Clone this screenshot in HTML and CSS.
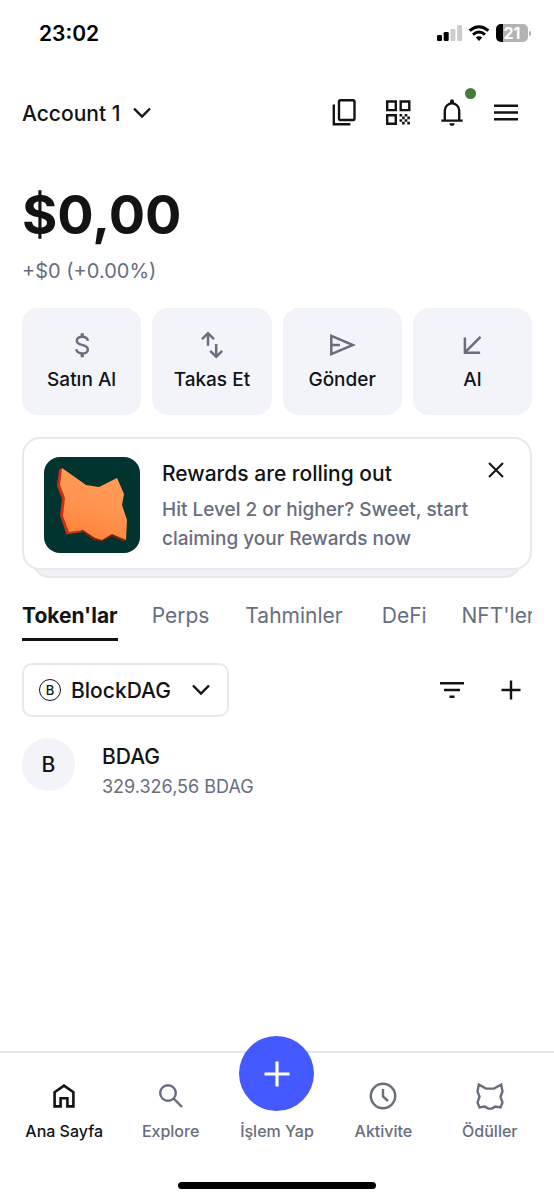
FILE: index.html
```html
<!DOCTYPE html>
<html lang="tr">
<head>
<meta charset="utf-8">
<meta name="viewport" content="width=device-width, initial-scale=1">
<title>Account 1</title>
<link rel="stylesheet" href="styles.css">
</head>
<body>
<div class="status">
  <time class="clock">23:02</time>
  <div class="status-icons">
    <svg width="26" height="16" viewBox="0 0 26 16" aria-hidden="true"><rect x="0" y="10" width="5" height="6" rx="1.3"/><rect x="6.7" y="7" width="5" height="9" rx="1.3"/><rect x="13.4" y="4" width="5" height="12" rx="1.3" fill="#ccc"/><rect x="20.1" y="0" width="5" height="16" rx="1.3" fill="#ccc"/></svg>
    <svg width="22" height="16" viewBox="0 0 22 16" aria-hidden="true"><path d="M1.6 5.7Q11-2.4 20.4 5.7M5 9.6Q11 4.5 17 9.6" fill="none" stroke="#000" stroke-width="2.9"/><path d="M7.7 12.6Q11 9.8 14.3 12.6L11 16z"/></svg>
    <div class="battery"><span class="battery-body">21</span><span class="battery-tip"></span></div>
  </div>
</div>

<header class="header">
  <button class="account" type="button">Account 1
    <svg class="chevron" width="18" height="12" viewBox="0 0 18 12" aria-hidden="true"><path d="M1 1.5l8 8 8-8"/></svg>
  </button>
  <div class="header-actions">
    <button class="icon-btn" type="button" aria-label="Copy"><svg width="28" height="28" viewBox="0 0 28 28"><rect x="9" y="1.200" width="15.500" height="19.800" rx="1.600"/><path d="M3.800 5.500v19.800h16.600"/></svg></button>
    <button class="icon-btn" type="button" aria-label="QR"><svg width="28" height="28" viewBox="0 0 28 28"><path d="M3.200 2.500h8.600v8.600H3.200zM16.700 2.500h8.600v8.600h-8.600zM3.200 16.200h8.600v8.600H3.200z"/><path class="solid" d="M15.500 15h2.600v2.600h-2.600zM20.700 15h2.600v2.600h-2.600zM18.100 17.600h2.600v2.600h-2.600zM23.300 17.600h2.600v2.600h-2.600zM15.500 20.200h2.600v2.600h-2.600zM20.700 20.200h2.600v2.600h-2.600zM18.100 22.800h2.600v2.600h-2.600zM23.300 22.800h2.600v2.600h-2.600z"/></svg></button>
    <button class="icon-btn" type="button" aria-label="Notifications"><svg width="28" height="28" viewBox="0 0 28 28"><path d="M3.300 21.600h21.400M6.800 21.600v-10a7.200 7.200 0 0 1 14.400 0v10"/><path class="solid" d="M12 4.200V2.200a2 2 0 0 1 4 0v2zM11.400 24.200h5.200a2.600 2.600 0 0 1-5.200 0z"/></svg><span class="dot"></span></button>
    <button class="icon-btn" type="button" aria-label="Menu"><svg width="28" height="28" viewBox="0 0 28 28"><path d="M2 6.800h24M2 13.500h24M2 20.200h24"/></svg></button>
  </div>
</header>

<main class="main">
  <h1 class="balance">$0,00</h1>
  <p class="change">+$0 (+0.00%)</p>

  <div class="actions">
    <button class="action" type="button"><svg width="28" height="28" viewBox="0 0 28 28" aria-hidden="true"><path d="M20 9.800C19.400 7.400 17.200 5.800 14.200 5.800c-3.200 0-5.400 1.600-5.400 3.900 0 2.500 2.200 3.400 5.300 4.200 3.400.900 5.700 1.900 5.700 4.500 0 2.500-2.300 4.100-5.500 4.100-3.200 0-5.500-1.700-6.100-4.200"/><path stroke-width="3.200" d="M14.200 2.200v4M14.200 22.200v4"/></svg>Satın Al</button>
    <button class="action" type="button"><svg width="28" height="28" viewBox="0 0 28 28" aria-hidden="true"><path d="M10 14.800V2.500M4 8.200l6-6 6 6M18.200 13v12.500M12.200 19.800l6 6 6-6"/></svg>Takas Et</button>
    <button class="action" type="button"><svg width="28" height="28" viewBox="0 0 28 28" aria-hidden="true"><path d="M3.300 4.900v18.200L25 14zM4 14h8"/></svg>Gönder</button>
    <button class="action" type="button"><svg width="28" height="28" viewBox="0 0 28 28" aria-hidden="true"><path d="M22.500 5.800L7 21.300M6.900 6.500v15.200h15.200"/></svg>Al</button>
  </div>

  <section class="promo">
    <div class="promo-card">
      <svg class="promo-art" width="96" height="96" viewBox="0 0 96 96" aria-hidden="true">
        <defs><linearGradient id="fox" x1="0.600" y1="0" x2="0.300" y2="1"><stop offset="0" stop-color="#ff9d57"/><stop offset="0.500" stop-color="#ff9450"/><stop offset="1" stop-color="#ff8238"/></linearGradient></defs>
        <rect width="96" height="96" rx="16" fill="#02342f"/>
        <path d="M18 11L15 12.500 13 29l5 13-2 16 6.500 19.500L39 75 58 60z" fill="#c92f13"/>
        <path d="M36 73l14 10.500 8 .800 10-5 13 6 1-3-14-8z" fill="#7a210f"/>
        <path d="M18 11L42 28l13 2 18-9 7 16-2 11 5 15-1 20-14-6-10 6-7-2-12-8-14 2-6-16 2-18-5-13z" fill="url(#fox)"/>
      </svg>
      <div class="promo-text">
        <h2 class="promo-title">Rewards are rolling out</h2>
        <p class="promo-copy">Hit Level 2 or higher? Sweet, start claiming your Rewards now</p>
      </div>
      <button class="close" type="button" aria-label="Close"><svg width="16" height="16" viewBox="0 0 16 16"><path d="M1 1l14 14M15 1L1 15"/></svg></button>
    </div>
  </section>

  <nav class="tabs">
    <a class="tab active" href="#" data-label="Token'lar"><span>Token'lar</span></a>
    <a class="tab" href="#" data-label="Perps"><span>Perps</span></a>
    <a class="tab" href="#" data-label="Tahminler"><span>Tahminler</span></a>
    <a class="tab" href="#" data-label="DeFi"><span>DeFi</span></a>
    <a class="tab" href="#" data-label="NFT'ler"><span>NFT'ler</span></a>
  </nav>

  <div class="toolbar">
    <button class="network" type="button"><span class="network-badge">B</span>BlockDAG
      <svg class="chevron" width="18" height="12" viewBox="0 0 18 12" aria-hidden="true"><path d="M1 1.500l8 8 8-8"/></svg>
    </button>
    <div class="tools">
      <button class="icon-btn" type="button" aria-label="Filter"><svg width="28" height="28" viewBox="0 0 28 28"><path d="M2 7.300h24M6 14h16M11.500 20.700h5"/></svg></button>
      <button class="icon-btn" type="button" aria-label="Add"><svg width="28" height="28" viewBox="0 0 28 28"><path d="M4.500 14h19M14 4.500v19"/></svg></button>
    </div>
  </div>

  <ul class="tokens">
    <li class="token">
      <span class="token-avatar">B</span>
      <div><div class="token-name">BDAG</div><div class="token-amount">329.326,56 BDAG</div></div>
    </li>
  </ul>
</main>

<nav class="bottom">
  <a class="item current" href="#"><svg width="28" height="28" viewBox="0 0 28 28" aria-hidden="true"><path stroke-width="2.600" d="M4.600 10.200L14 3.700l9.400 6.500v14.200h-6v-8.200h-6.800v8.200h-6z"/></svg>Ana Sayfa</a>
  <a class="item" href="#"><svg width="28" height="28" viewBox="0 0 28 28" aria-hidden="true"><circle cx="11" cy="11" r="7.800"/><path d="M16.700 16.700l8.300 8.300"/></svg>Explore</a>
  <a class="item trade" href="#"><span class="fab"><svg width="28" height="28" viewBox="0 0 28 28" aria-hidden="true"><path stroke-width="3.200" d="M1.500 14h25M14 1.500v25"/></svg></span>İşlem Yap</a>
  <a class="item" href="#"><svg width="28" height="28" viewBox="0 0 28 28" aria-hidden="true"><circle cx="14" cy="14" r="12.200"/><path d="M14 7v7.500l5 4.500"/></svg>Aktivite</a>
  <a class="item" href="#"><svg width="28" height="28" viewBox="0 0 28 28" aria-hidden="true"><path d="M2.800 2.500L10 6.600h8l7.200-4.100 1.300 6.800-2 5.500 2 5.700-2 5-5.300-.900-3.400 2h-3.600l-3.400-2-5.300.900-2-5 2-5.700-2-5.500z"/></svg>Ödüller</a>
</nav>
<div class="home"></div>
</body>
</html>
```

FILE: styles.css
```css
* { box-sizing: border-box; }
body {
  margin: 0;
  min-height: 100vh;
  display: flex;
  flex-direction: column;
  background: #fff;
  color: #111314;
  font-family: Inter, "Liberation Sans", sans-serif;
  font-size: 21px;
}
h1, h2, p, ul { margin: 0; padding: 0; }
ul { list-style: none; }
button { border: 0; background: none; padding: 0; font: inherit; color: inherit; cursor: pointer; }
a { color: inherit; text-decoration: none; }
svg { display: block; flex: none; }

.status {
  display: flex;
  justify-content: space-between;
  align-items: center;
  height: 66px;
  padding: 0 23px 0 39px;
  color: #000;
}
.clock { font-weight: 600; }
.status-icons { display: flex; align-items: center; gap: 5px; }
.battery { display: flex; align-items: center; gap: 1px; margin-left: 1px; }
.battery-body {
  width: 32px;
  height: 18px;
  border-radius: 5px;
  background: linear-gradient(90deg, #000 7px, #b3b3b3 7px);
  color: #fff;
  font-size: 16px;
  font-weight: 700;
  line-height: 18px;
  text-align: center;
}
.battery-tip { width: 2px; height: 5px; border-radius: 0 2px 2px 0; background: #b3b3b3; }

.header {
  display: flex;
  justify-content: space-between;
  align-items: center;
  height: 94px;
  padding: 0 34px 0 22px;
}
.account { display: flex; align-items: center; gap: 13px; font-weight: 500; }
.chevron, .icon-btn svg, .close svg { fill: none; stroke: #111314; stroke-width: 2.4; }
.header-actions { display: flex; gap: 26px; }
.icon-btn { position: relative; }
.icon-btn .solid { fill: #111314; stroke: none; }
.dot {
  position: absolute;
  top: -11px;
  right: -10px;
  width: 11px;
  height: 11px;
  border-radius: 50%;
  background: #457a39;
}

.main { padding: 22px 22px 0; }
.balance { font-size: 54px; line-height: 66px; font-weight: 700; }
.change { margin-top: 8px; font-size: 20px; line-height: 30px; color: #686e7d; }

.actions { display: grid; grid-template-columns: repeat(4, 1fr); gap: 11px; margin-top: 22px; }
.action {
  display: flex;
  flex-direction: column;
  align-items: center;
  gap: 9px;
  padding: 23px 0;
  border-radius: 16px;
  background: #f3f3fa;
  font-size: 19px;
  line-height: 24px;
  font-weight: 500;
}
.action svg { fill: none; stroke: #686e7d; stroke-width: 2.5; }

.promo { position: relative; margin-top: 22px; padding-bottom: 8px; }
.promo::before {
  content: "";
  position: absolute;
  inset: 40px 11px 0;
  border: 2px solid #e9e9ed;
  border-radius: 16px;
  background: #f1f1f5;
}
.promo-card {
  position: relative;
  display: flex;
  align-items: flex-start;
  gap: 10px;
  padding: 18px 26px 15px 20px;
  border: 2px solid #e9e9ed;
  border-radius: 18px;
  background: #fff;
}
.promo-text { flex: 1; padding-left: 12px; }
.promo-title { font-size: 21px; line-height: 34px; font-weight: 500; }
.promo-copy { margin-top: 4px; font-size: 19px; line-height: 29px; font-weight: 500; color: #686e7d; }
.close { margin-top: 5px; }
.close svg { stroke-width: 2; }

.tabs { display: flex; gap: 34px; margin-top: 21px; overflow: hidden; color: #686e7d; }
.tab { flex: none; padding: 3px 0 9px; line-height: 27px; white-space: nowrap; border-bottom: 3px solid transparent; }
.tab span { display: block; }
.tab::after {
  content: attr(data-label);
  display: block;
  height: 0;
  overflow: hidden;
  visibility: hidden;
  font-weight: 700;
}
.tab.active { color: #111314; font-weight: 700; border-color: #111314; }

.toolbar { display: flex; justify-content: space-between; align-items: center; margin-top: 22px; padding-right: 7px; }
.network {
  display: flex;
  align-items: center;
  gap: 10px;
  height: 54px;
  padding: 0 17px 0 15px;
  border: 2px solid #e9e9ed;
  border-radius: 10px;
  font-weight: 500;
}
.network .chevron { margin-left: 11px; }
.network-badge {
  width: 22px;
  height: 22px;
  border: 1px solid #111314;
  border-radius: 50%;
  font-size: 13px;
  line-height: 20px;
  font-weight: 500;
  text-align: center;
}
.tools { display: flex; gap: 31px; }

.tokens { margin-top: 21px; }
.token { display: flex; gap: 27px; }
.token-avatar {
  width: 53px;
  height: 53px;
  border-radius: 50%;
  background: #f3f3fa;
  font-weight: 500;
  line-height: 54px;
  text-align: center;
}
.token-name { margin-top: 3px; line-height: 32px; font-weight: 500; }
.token-amount { font-size: 18px; line-height: 28px; color: #686e7d; }

.bottom {
  display: grid;
  grid-template-columns: repeat(5, 1fr);
  margin-top: auto;
  padding: 29px 11px 0;
  border-top: 2px solid #e8e8ea;
  color: #686e7d;
  font-size: 16px;
  line-height: 24px;
  font-weight: 500;
}
.item { position: relative; display: flex; flex-direction: column; align-items: center; gap: 9px; white-space: nowrap; }
.item svg { fill: none; stroke: #686e7d; stroke-width: 2.4; }
.current { color: #111314; }
.current svg { stroke: #111314; }
.trade { justify-content: flex-end; }
.fab {
  position: absolute;
  bottom: 32px;
  display: grid;
  place-items: center;
  width: 75px;
  height: 75px;
  border-radius: 50%;
  background: #4459ff;
}
.fab svg { stroke: #fff; }
.home { width: 198px; height: 7px; margin: 39px auto 11px; border-radius: 4px; background: #000; }
```
